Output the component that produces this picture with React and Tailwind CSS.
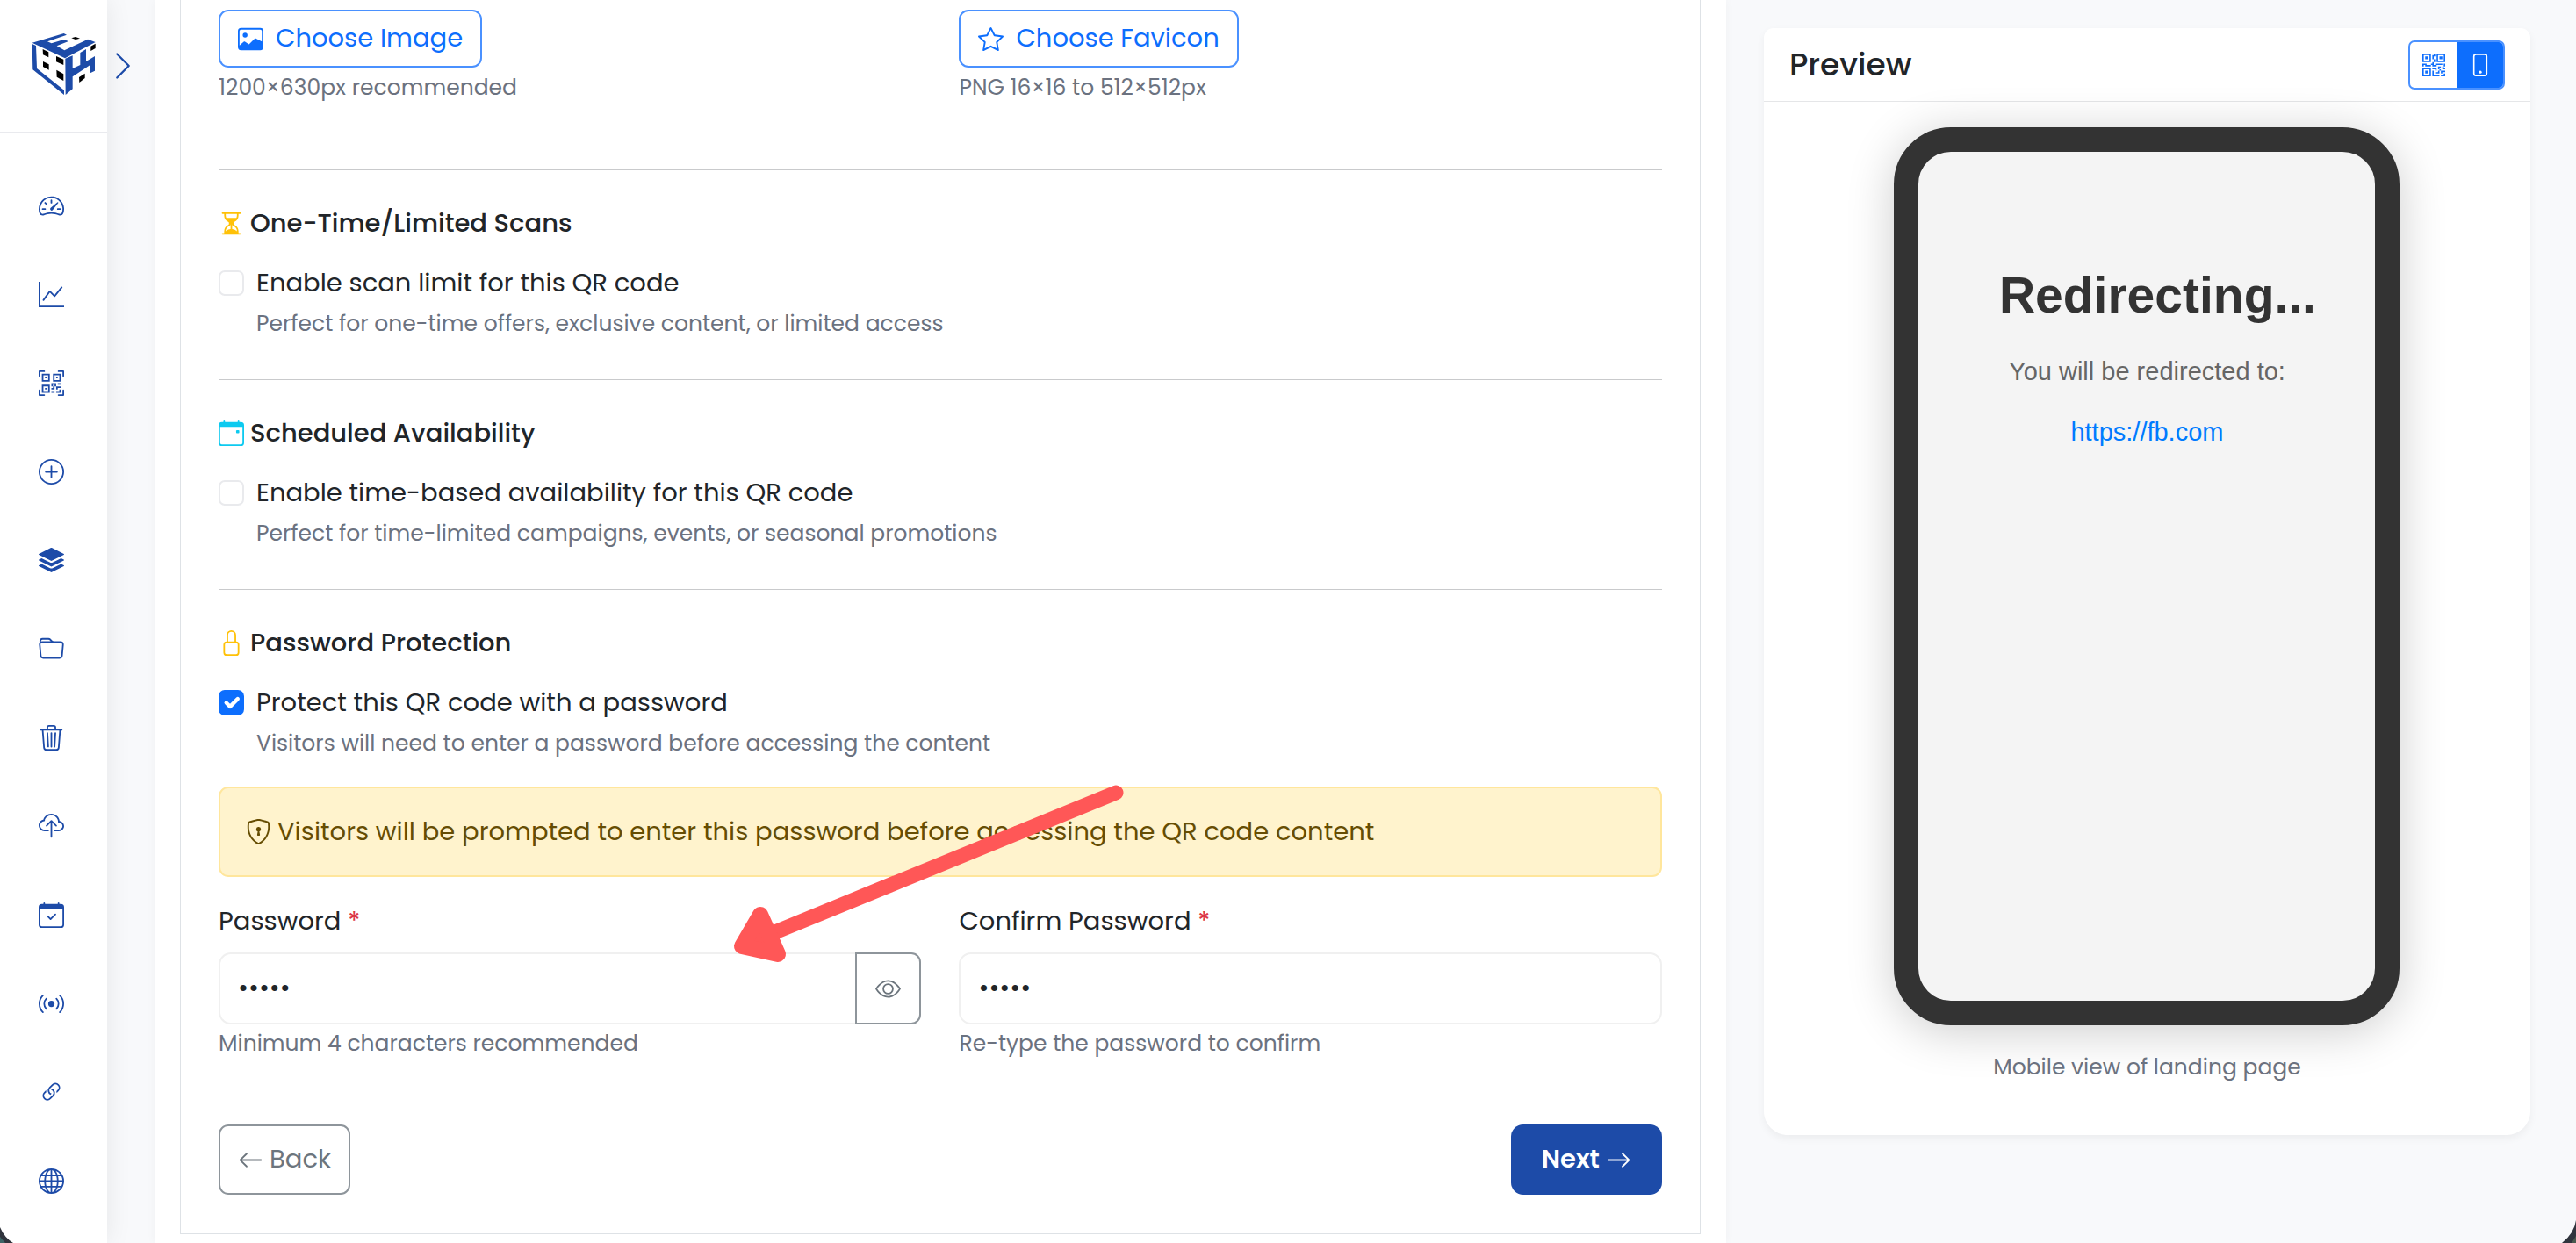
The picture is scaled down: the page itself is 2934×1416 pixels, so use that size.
import React, { useState } from 'react';
import {
  BsArrowLeft,
  BsArrowRight,
  BsBroadcast,
  BsCalendarCheck,
  BsCalendarEvent,
  BsChevronRight,
  BsCloudUpload,
  BsEye,
  BsFolder,
  BsGlobe,
  BsGraphUp,
  BsHourglassSplit,
  BsImage,
  BsLink45Deg,
  BsLock,
  BsPhone,
  BsPlusCircle,
  BsQrCode,
  BsQrCodeScan,
  BsShieldLock,
  BsSpeedometer2,
  BsStack,
  BsStar,
  BsTrash3,
} from 'react-icons/bs';

const navItems = [
  { label: 'Dashboard', icon: BsSpeedometer2 },
  { label: 'Analytics', icon: BsGraphUp },
  { label: 'QR codes', icon: BsQrCodeScan },
  { label: 'Create', icon: BsPlusCircle },
  { label: 'Bulk', icon: BsStack },
  { label: 'Folders', icon: BsFolder },
  { label: 'Trash', icon: BsTrash3 },
  { label: 'Upload', icon: BsCloudUpload },
  { label: 'Schedule', icon: BsCalendarCheck },
  { label: 'Broadcast', icon: BsBroadcast },
  { label: 'Links', icon: BsLink45Deg },
  { label: 'Domains', icon: BsGlobe },
];

function Logo() {
  return (
    <svg viewBox="0 0 258 246" className="h-[82px] w-[86px]" aria-hidden="true">
      <g fill="#1d4ba8">
        {/* top face */}
        <path d="M20 50 128 18 138 23 72 46 86 52 128 39 144 45 104 61 130 76 210 38 236 48 132 103Z" />
        {/* left face */}
        <path d="M20 54 33 60 36 138 129 212 129 228 22 142Z" />
        {/* right face */}
        <path d="M133 104 158 94 158 138 184 126 184 84 204 72 204 114 234 96 234 146 218 154 218 126 158 166 158 208 134 228Z" />
      </g>
      <g fill="#000">
        <path d="M154 34 168 30 183 35 168 39Z" />
        <path d="M56 72 76 82 76 100 57 91Z" />
        <path d="M57 114 77 124 77 143 57 132Z" />
        <path d="M102 96 127 107 127 126 102 115Z" />
        <path d="M103 143 127 157 127 180 104 167Z" />
        <path d="M220 62 236 53 236 69 220 78Z" />
        <path d="M180 168 200 155 200 171 181 186Z" />
      </g>
    </svg>
  );
}

function Sidebar() {
  return (
    <aside className="relative z-10 w-[122px] shrink-0 bg-white shadow-[0_0_28px_rgba(0,0,0,0.08)]">
      <div className="h-[151px] border-b border-[#e9eaee] pt-8 pl-[30px]">
        <Logo />
      </div>
      <button
        type="button"
        aria-label="Expand menu"
        className="absolute top-[57px] left-full text-[36px] text-[#1d4ba8]"
      >
        <BsChevronRight />
      </button>
      <nav className="flex flex-col pt-[33px]">
        {navItems.map(({ label, icon: Icon }) => (
          <a
            key={label}
            href="#"
            aria-label={label}
            className="flex h-[101px] items-center pl-11 text-[29px] text-[#1d4ba8]"
          >
            <Icon />
          </a>
        ))}
      </nav>
    </aside>
  );
}

function UploadButton({ icon: Icon, label, hint }) {
  return (
    <div>
      <button
        type="button"
        className="flex h-[66px] items-center gap-3.5 rounded-[11px] border-2 border-[#4a91ff] px-5 text-[29px] text-[#0d6efd]"
      >
        <Icon />
        {label}
      </button>
      <p className="mt-1 text-[25px] leading-[38px] text-[#6b7280]">{hint}</p>
    </div>
  );
}

function OptionSection({ id, icon: Icon, iconClass, title, label, hint, checked, onChange, children }) {
  return (
    <section className="border-t border-[#c9cacc] pt-[42px] pb-11">
      <h2 className="flex items-center gap-[7px] text-[29px] leading-9 font-medium">
        <Icon className={iconClass} />
        {title}
      </h2>
      <div className="mt-7 flex items-center gap-3.5">
        <span className="relative flex">
          <input
            id={id}
            type="checkbox"
            checked={checked}
            onChange={onChange}
            className="peer size-[29px] appearance-none rounded-[7px] border-2 border-[#e9eaed] bg-white checked:border-[#0d6efd] checked:bg-[#0d6efd]"
          />
          <svg
            viewBox="0 0 20 20"
            className="pointer-events-none absolute inset-0 hidden size-[29px] peer-checked:block"
          >
            <path d="m6 10 3 3 6-6" fill="none" stroke="#fff" strokeWidth="3" strokeLinecap="round" strokeLinejoin="round" />
          </svg>
        </span>
        <label htmlFor={id} className="text-[29px] leading-11">
          {label}
        </label>
      </div>
      <p className="mt-1.5 pl-[43px] text-[25px] leading-[38px] text-[#6b7280]">{hint}</p>
      {children}
    </section>
  );
}

function FieldLabel({ htmlFor, children }) {
  return (
    <label htmlFor={htmlFor} className="block text-[29px] leading-11">
      {children} <span className="text-[#dc3545]">*</span>
    </label>
  );
}

// Annotation arrow pointing at the password field
function Arrow() {
  return (
    <svg
      viewBox="0 0 460 210"
      className="pointer-events-none absolute -top-[136px] left-[581px] h-[210px] w-[460px] max-w-none"
      fill="none"
      stroke="#ff5757"
      strokeLinecap="round"
      strokeLinejoin="round"
      aria-hidden="true"
    >
      <path d="M441 12 50 172" strokeWidth="17" />
      <path d="M36 151 15 187 56 196Z" fill="#ff5757" strokeWidth="18" />
    </svg>
  );
}

function PasswordFields() {
  const [password, setPassword] = useState('abcde');
  const [confirm, setConfirm] = useState('abcde');
  const [visible, setVisible] = useState(false);

  return (
    <>
      <div className="mt-[30px] flex h-[103px] items-center gap-[7px] rounded-[11px] border-2 border-[#ffe69c] bg-[#fff3cd] px-[29px] text-[29px] text-[#664d03]">
        <BsShieldLock />
        Visitors will be prompted to enter this password before accessing the QR code content
      </div>
      <div className="mt-7 grid grid-cols-2 gap-[43px]">
        <div className="relative">
          <FieldLabel htmlFor="password">Password</FieldLabel>
          <div className="mt-3.5 flex h-[82px]">
            <input
              id="password"
              type={visible ? 'text' : 'password'}
              value={password}
              onChange={(e) => setPassword(e.target.value)}
              className="min-w-0 flex-1 rounded-l-[14px] border-2 border-r-0 border-[#f0f0f0] px-5 text-[29px]"
            />
            <button
              type="button"
              aria-label="Show password"
              onClick={() => setVisible(!visible)}
              className="flex w-[75px] items-center justify-center rounded-r-[11px] border-2 border-[#8e959b] text-[29px] text-[#6c757d]"
            >
              <BsEye />
            </button>
          </div>
          <p className="mt-[3px] text-[25px] leading-[38px] text-[#6b7280]">Minimum 4 characters recommended</p>
          <Arrow />
        </div>
        <div>
          <FieldLabel htmlFor="confirm">Confirm Password</FieldLabel>
          <div className="mt-3.5 flex h-[82px]">
            <input
              id="confirm"
              type="password"
              value={confirm}
              onChange={(e) => setConfirm(e.target.value)}
              className="min-w-0 flex-1 rounded-[14px] border-2 border-[#f0f0f0] px-5 text-[29px]"
            />
          </div>
          <p className="mt-[3px] text-[25px] leading-[38px] text-[#6b7280]">Re-type the password to confirm</p>
        </div>
      </div>
    </>
  );
}

function Preview() {
  return (
    <aside className="mt-8 self-start rounded-t-[11px] rounded-b-[27px] bg-white pb-[58px] shadow-[0_4px_10px_rgba(0,0,0,0.05)]">
      <header className="flex h-[84px] items-center justify-between border-b border-[#e5e6e8] px-[29px]">
        <h2 className="text-[36px] font-medium">Preview</h2>
        <div className="flex h-14 w-[110px] overflow-hidden rounded-[7px] border-2 border-[#4a91ff] text-[26px]">
          <button type="button" aria-label="QR code view" className="flex flex-1 items-center justify-center text-[#0d6efd]">
            <BsQrCode />
          </button>
          <button type="button" aria-label="Mobile view" className="flex flex-1 items-center justify-center bg-[#0d6efd] text-white">
            <BsPhone />
          </button>
        </div>
      </header>
      <div className="mx-auto mt-[29px] h-[1023px] w-[576px] rounded-[65px] border-[28px] border-[#333] bg-[#f4f4f4] text-center font-['Liberation_Sans',Arial,sans-serif] shadow-[0_7px_54px_rgba(0,0,0,0.2)]">
        <h1 className="mt-[130px] pl-6 text-[57px] leading-[66px] font-bold text-[#333]">Redirecting...</h1>
        <p className="mt-[37px] text-[29px] leading-[34px] text-[#666]">You will be redirected to:</p>
        <a href="https://fb.com" className="mt-[35px] block text-[29px] leading-[34px] text-[#007bff]">
          https://fb.com
        </a>
      </div>
      <p className="mt-[29px] text-center text-[25px] leading-[38px] text-[#6b7280]">Mobile view of landing page</p>
    </aside>
  );
}

export default function App() {
  const [scanLimit, setScanLimit] = useState(false);
  const [schedule, setSchedule] = useState(false);
  const [protect, setProtect] = useState(true);

  return (
    <div className="relative flex h-screen overflow-hidden bg-[#f8f9fb] font-['Poppins','Inter',sans-serif] text-[#212529]">
      <Sidebar />
      <main className="grid flex-1 grid-cols-[41fr_20fr] gap-[43px] pr-[52px] pl-[54px]">
        <div className="bg-white px-[29px] shadow-[0_0_10px_rgba(0,0,0,0.04)]">
          <form className="border border-t-0 border-[#dee2e6] px-[43px] pt-[11px] pb-11">
            <div className="grid grid-cols-2 gap-[43px] pb-[74px]">
              <UploadButton icon={BsImage} label="Choose Image" hint="1200×630px recommended" />
              <UploadButton icon={BsStar} label="Choose Favicon" hint="PNG 16×16 to 512×512px" />
            </div>
            <OptionSection
              id="scan-limit"
              icon={BsHourglassSplit}
              iconClass="text-[#ffc107]"
              title="One-Time/Limited Scans"
              label="Enable scan limit for this QR code"
              hint="Perfect for one-time offers, exclusive content, or limited access"
              checked={scanLimit}
              onChange={() => setScanLimit(!scanLimit)}
            />
            <OptionSection
              id="schedule"
              icon={BsCalendarEvent}
              iconClass="text-[#0dcaf0]"
              title="Scheduled Availability"
              label="Enable time-based availability for this QR code"
              hint="Perfect for time-limited campaigns, events, or seasonal promotions"
              checked={schedule}
              onChange={() => setSchedule(!schedule)}
            />
            <OptionSection
              id="protect"
              icon={BsLock}
              iconClass="text-[#ffc107]"
              title="Password Protection"
              label="Protect this QR code with a password"
              hint="Visitors will need to enter a password before accessing the content"
              checked={protect}
              onChange={() => setProtect(!protect)}
            >
              {protect && <PasswordFields />}
            </OptionSection>
            <div className="flex justify-between pt-[29px]">
              <button
                type="button"
                className="flex h-20 items-center gap-[7px] rounded-[11px] border-2 border-[#8e959b] px-5 text-[29px] text-[#6c757d]"
              >
                <BsArrowLeft />
                Back
              </button>
              <button
                type="button"
                className="flex h-20 items-center gap-[7px] rounded-[14px] bg-[#1d4ba8] px-[35px] text-[29px] font-semibold text-white"
              >
                Next
                <BsArrowRight />
              </button>
            </div>
          </form>
        </div>
        <Preview />
      </main>

      {/* window corners */}
      <svg viewBox="0 0 16 18" className="absolute bottom-0 left-0 z-20 h-[18px] w-4" aria-hidden="true">
        <path d="M0 0Q5 12 15 18H0Z" fill="#30343d" />
        <path d="M0 11 6 18H0Z" fill="#3d6466" />
      </svg>
      <svg viewBox="0 0 16 26" className="absolute right-0 bottom-0 z-20 h-[26px] w-4" aria-hidden="true">
        <path d="M16 0Q14 15 0 26H16Z" fill="#30343d" />
        <path d="M16 18 11 26H16Z" fill="#4a5a4e" />
      </svg>
    </div>
  );
}
